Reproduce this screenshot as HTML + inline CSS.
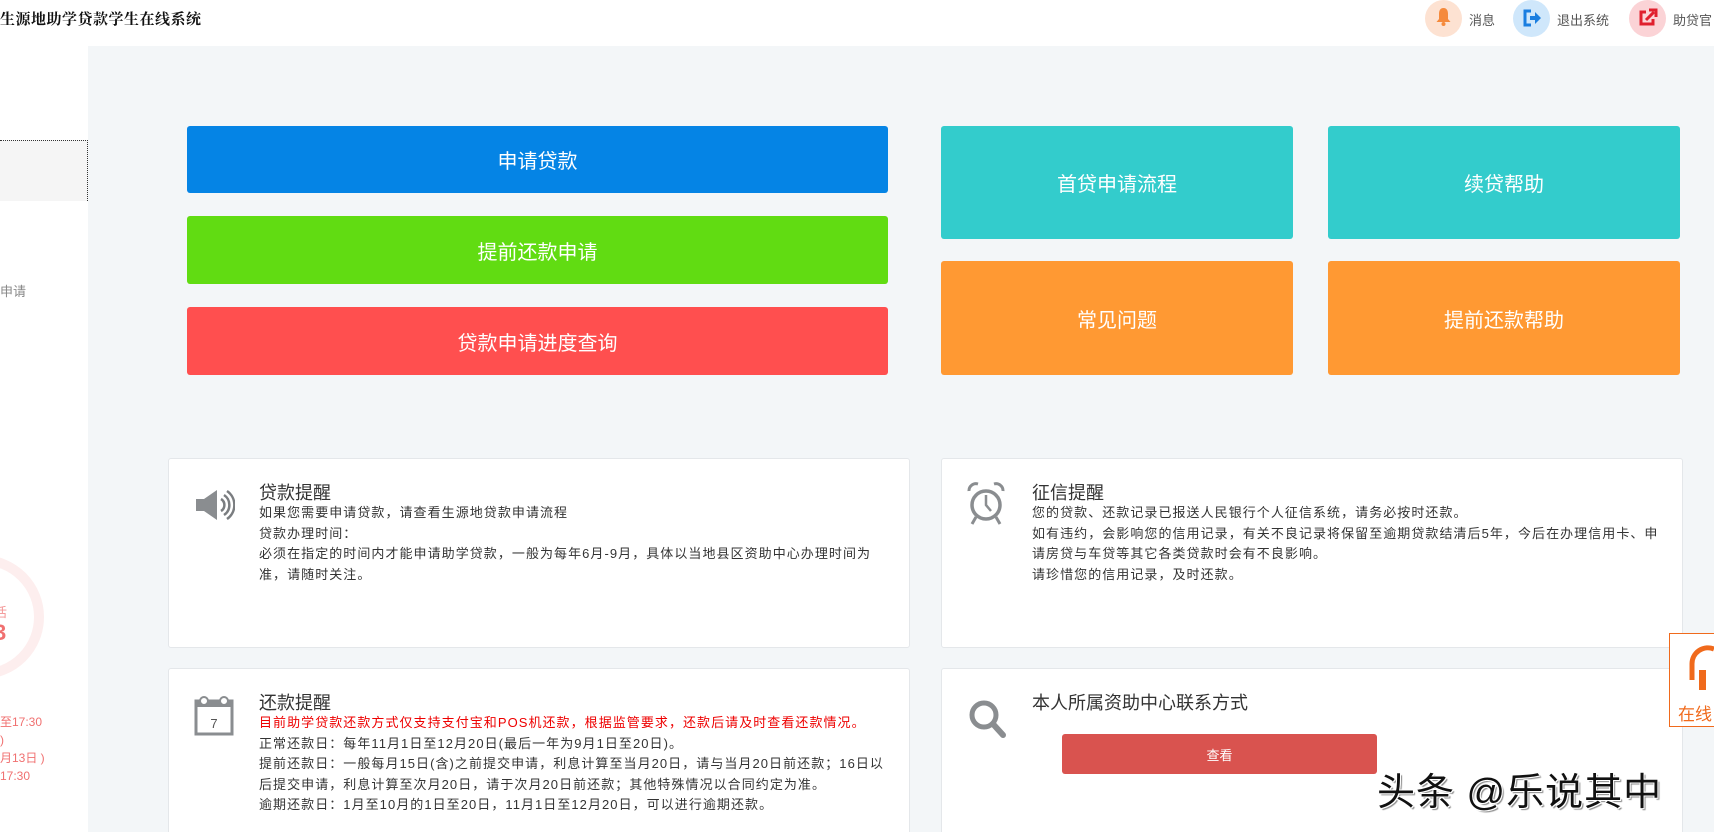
<!DOCTYPE html>
<html style="overflow:hidden;width:1714px;height:832px"><head><meta charset="utf-8">
<style>
*{margin:0;padding:0;box-sizing:border-box}
body{width:1714px;height:832px;overflow:hidden;background:#fff;font-family:"Liberation Sans","Noto Sans CJK SC",sans-serif;position:relative;color:#333}
.abs{position:absolute}
.hdr{left:0;top:0;width:1714px;height:46px;background:#fff}
.title{left:0;top:8px;font-family:"Liberation Serif","Noto Serif CJK SC",serif;font-weight:bold;font-size:15px;color:#111;letter-spacing:0.5px}
.main{left:88px;top:46px;width:1626px;height:786px;background:#f3f6f8}
.side{left:0;top:46px;width:88px;height:786px;background:#fff}
.btn{position:absolute;color:#fff;font-size:20px;display:flex;align-items:center;justify-content:center;border-radius:3px}
.card{position:absolute;background:#fff;border:1px solid #e4e7ea;border-radius:3px}
.ct{position:absolute;left:90px;font-size:18px;color:#333}
.cb{position:absolute;left:90px;font-size:13px;line-height:20.5px;color:#333;letter-spacing:1.05px;white-space:nowrap}
.hi{position:absolute;top:0;width:37px;height:37px;border-radius:50%}
.ht{position:absolute;top:10px;font-size:13px;color:#555}
</style></head><body>
<div class="abs hdr"></div>
<div class="abs title">生源地助学贷款学生在线系统</div>

<div class="hi" style="left:1425px;background:#fde2d2"></div>
<svg class="abs" style="left:1434px;top:7px" width="19" height="20" viewBox="0 0 19 20"><path d="M9.5 1 C6 1 5 4 5 7 L5 12 L2.5 15 L16.5 15 L14 12 L14 7 C14 4 13 1 9.5 1Z" fill="#f58a3c"/><circle cx="9.5" cy="17" r="2" fill="#f58a3c"/></svg>
<div class="ht" style="left:1469px">消息</div>
<div class="hi" style="left:1513px;background:#cfe7fb"></div>
<svg class="abs" style="left:1521px;top:8px" width="22" height="20" viewBox="0 0 22 20"><path d="M10 3 H4 V17 H10" stroke="#1a7ee0" stroke-width="3" fill="none"/><path d="M9 8 H14 V4 L20 10 L14 16 V12 H9Z" fill="#1a7ee0"/></svg>
<div class="ht" style="left:1557px">退出系统</div>
<div class="hi" style="left:1629px;background:#fbd3d6"></div>
<svg class="abs" style="left:1637px;top:7px" width="21" height="21" viewBox="0 0 21 21"><path d="M9 5 H4 V17 H16 V12" stroke="#e0202e" stroke-width="3" fill="none"/><path d="M9 13 L17 5 M12 3 H19 V10" stroke="#e0202e" stroke-width="3" fill="none"/></svg>
<div class="ht" style="left:1673px">助贷官</div>

<div class="abs side"></div>
<div class="abs" style="left:0;top:140px;width:88px;height:61px;background:#f5f5f5;border-top:1px dotted #333;border-right:1px dotted #333"></div>
<div class="abs" style="left:0;top:281px;font-size:13px;color:#888">申请</div>
<div class="abs" style="left:-80px;top:555px;width:124px;height:124px;border-radius:50%;border:10px solid #fdeeee"></div>
<div class="abs" style="left:-6px;top:602px;font-size:13px;color:#f39393">活</div>
<div class="abs" style="left:-6px;top:620px;font-size:22px;color:#f07070;font-weight:bold">3</div>
<div class="abs" style="left:0;top:713px;font-size:12px;line-height:18px;color:#f07070">至17:30<br>)<br>月13日 )<br>17:30</div>

<div class="abs main"></div>

<div class="btn" style="left:187px;top:126px;width:701px;height:67px;background:#0584e5">申请贷款</div>
<div class="btn" style="left:187px;top:216px;width:701px;height:68px;background:#61dc12">提前还款申请</div>
<div class="btn" style="left:187px;top:307px;width:701px;height:68px;background:#ff4f4f">贷款申请进度查询</div>
<div class="btn" style="left:941px;top:126px;width:352px;height:113px;background:#33cccc">首贷申请流程</div>
<div class="btn" style="left:1328px;top:126px;width:352px;height:113px;background:#33cccc">续贷帮助</div>
<div class="btn" style="left:941px;top:261px;width:352px;height:114px;background:#ff9933">常见问题</div>
<div class="btn" style="left:1328px;top:261px;width:352px;height:114px;background:#ff9933">提前还款帮助</div>

<div class="card" style="left:168px;top:458px;width:742px;height:190px">
<svg class="abs" style="left:26px;top:28px" width="40" height="36" viewBox="0 0 40 36"><path d="M1 12 H9 L22 3 V33 L9 24 H1Z" fill="#8a8d90"/><path d="M26 12 A7 7 0 0 1 26 24 M29 8 A12 12 0 0 1 29 28 M32 4 A17 17 0 0 1 32 32" stroke="#7a7d80" stroke-width="2.5" fill="none"/></svg>
<div class="ct" style="top:20px">贷款提醒</div>
<div class="cb" style="top:44px">如果您需要申请贷款，请查看生源地贷款申请流程<br>贷款办理时间：<br>必须在指定的时间内才能申请助学贷款，一般为每年6月-9月，具体以当地县区资助中心办理时间为<br>准，请随时关注。</div>
</div>

<div class="card" style="left:941px;top:458px;width:742px;height:190px">
<svg class="abs" style="left:24px;top:22px" width="40" height="46" viewBox="0 0 40 46"><circle cx="20" cy="24" r="14" stroke="#8a8d90" stroke-width="3.5" fill="none"/><path d="M20 14 V24 L25 30" stroke="#8a8d90" stroke-width="2.5" fill="none"/><path d="M3 10 A7 7 0 0 1 12 3 M37 10 A7 7 0 0 0 28 3 M10 36 L6 43 M30 36 L34 43" stroke="#8a8d90" stroke-width="3" fill="none"/></svg>
<div class="ct" style="top:20px">征信提醒</div>
<div class="cb" style="top:44px">您的贷款、还款记录已报送人民银行个人征信系统，请务必按时还款。<br>如有违约，会影响您的信用记录，有关不良记录将保留至逾期贷款结清后5年，今后在办理信用卡、申<br>请房贷与车贷等其它各类贷款时会有不良影响。<br>请珍惜您的信用记录，及时还款。</div>
</div>

<div class="card" style="left:168px;top:668px;width:742px;height:170px">
<svg class="abs" style="left:25px;top:24px" width="40" height="44" viewBox="0 0 40 44"><rect x="2" y="8" width="36" height="33" stroke="#8a8d90" stroke-width="3" fill="#fff"/><rect x="2" y="8" width="36" height="6" fill="#8a8d90"/><circle cx="10" cy="8" r="4" stroke="#8a8d90" stroke-width="2" fill="#fff"/><circle cx="30" cy="8" r="4" stroke="#8a8d90" stroke-width="2" fill="#fff"/><text x="20" y="35" font-size="13" text-anchor="middle" fill="#555" font-family="Liberation Sans">7</text></svg>
<div class="ct" style="top:20px">还款提醒</div>
<div class="cb" style="top:44px"><span style="color:#e00">目前助学贷款还款方式仅支持支付宝和POS机还款，根据监管要求，还款后请及时查看还款情况。</span><br>正常还款日：每年11月1日至12月20日(最后一年为9月1日至20日)。<br>提前还款日：一般每月15日(含)之前提交申请，利息计算至当月20日，请与当月20日前还款；16日以<br>后提交申请，利息计算至次月20日，请于次月20日前还款；其他特殊情况以合同约定为准。<br>逾期还款日：1月至10月的1日至20日，11月1日至12月20日，可以进行逾期还款。</div>
</div>

<div class="card" style="left:941px;top:668px;width:742px;height:170px">
<svg class="abs" style="left:26px;top:30px" width="40" height="42" viewBox="0 0 40 42"><circle cx="16" cy="16" r="12" stroke="#8a8d90" stroke-width="5" fill="#fff"/><path d="M25 25 L35 36" stroke="#8a8d90" stroke-width="6" stroke-linecap="round"/></svg>
<div class="ct" style="top:20px;left:90px">本人所属资助中心联系方式</div>
<div class="abs" style="left:120px;top:65px;width:315px;height:40px;background:#d9534f;border-radius:3px;color:#fff;font-size:13px;display:flex;align-items:center;justify-content:center">查看</div>
</div>

<div class="abs" style="left:1669px;top:633px;width:50px;height:94px;background:#fff;border:1px solid #f06a1c"></div>
<svg class="abs" style="left:1688px;top:640px" width="26" height="52" viewBox="0 0 26 52"><path d="M4 40 V24 A16 16 0 0 1 26 9" stroke="#f06a1c" stroke-width="5" fill="none"/><rect x="11" y="30" width="7" height="20" fill="#f06a1c"/></svg>
<div class="abs" style="left:1678px;top:700px;font-size:17px;color:#f06a1c">在线</div>

<div class="abs" style="left:1377px;top:761px;font-size:38px;letter-spacing:1px;color:#111;text-shadow:1px 1px 0 #fff,-1px -1px 0 #fff,1px -1px 0 #fff,-1px 1px 0 #fff,2px 2px 1px #888">头条 @乐说其中</div>
</body></html>
